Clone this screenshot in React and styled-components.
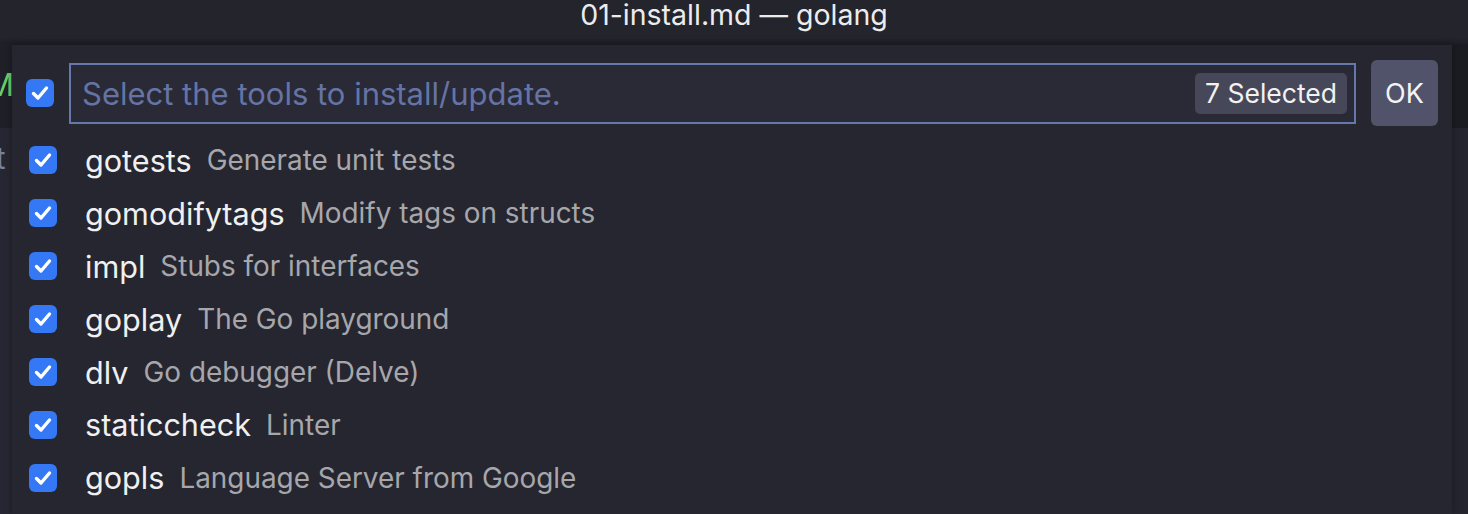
import React from "react";
import styled, { createGlobalStyle } from "styled-components";

const GlobalStyle = createGlobalStyle`
  body {
    margin: 0;
    background: #22232b;
    font-family: Inter, "Noto Sans", sans-serif;
    -webkit-font-smoothing: antialiased;
  }
`;

const Window = styled.div`
  width: 1468px;
  height: 514px;
  display: flex;
  flex-direction: column;
  overflow: hidden;
  background: #262732;
`;

const TitleBar = styled.div`
  height: 44px;
  flex: none;
  display: flex;
  justify-content: center;
  align-items: flex-start;
  box-sizing: border-box;
  background: linear-gradient(#23242c 85%, #1e1f26);
  color: #ececec;
  font-size: 28.5px;
  line-height: 29px;
`;

const Workbench = styled.div`
  flex: 1;
  position: relative;
  display: flex;
  flex-direction: column;
`;

const TabStrip = styled.div`
  height: 84px;
  flex: none;
  display: flex;
  align-items: center;
  background: #1f2028;
  box-shadow: inset -16px 0 0 #1b1c22;
`;

const ModifiedMark = styled.span`
  margin-left: -14px;
  color: #6bd068;
  font-size: 31px;
  padding-bottom: 4px;
`;

const Editor = styled.div`
  flex: 1;
  padding-top: 12px;
  box-shadow: inset -16px 0 0 #24252f;
  color: #78829f;
  font-size: 30px;
`;

const EditorText = styled.div`
  margin-left: -20px;
`;

const QuickPick = styled.div`
  position: absolute;
  top: 1px;
  left: 12px;
  right: 16px;
  bottom: 0;
  background: #252630;
  box-shadow: 0 0 8px rgba(0, 0, 0, 0.35);
  display: flex;
  flex-direction: column;
`;

const Header = styled.div`
  display: flex;
  align-items: center;
  gap: 15px;
  padding: 15px 14px 0 14px;
  height: 66px;
`;

const CheckBox = styled.span`
  width: 28px;
  height: 28px;
  flex: none;
  border-radius: 6px;
  background: #3478f6;
  display: flex;
  align-items: center;
  justify-content: center;
`;

const InputBox = styled.div`
  flex: 1;
  height: 61px;
  box-sizing: border-box;
  border: 2px solid #6677aa;
  background: #292a36;
  display: flex;
  align-items: center;
  padding: 0 7px 0 11px;
`;

const Placeholder = styled.span`
  flex: 1;
  color: #6574a4;
  font-size: 31px;
`;

const CountBadge = styled.span`
  background: #464859;
  color: #f2f2f2;
  border-radius: 5px;
  font-size: 26.5px;
  line-height: 29px;
  padding: 6px 10px 6px;
`;

const OkButton = styled.button`
  width: 67px;
  height: 66px;
  flex: none;
  border: none;
  border-radius: 6px;
  background: #50536a;
  color: #f4f4f4;
  font-family: inherit;
  font-size: 27px;
  padding: 0;
`;

const List = styled.div`
  padding-top: 8px;
  display: flex;
  flex-direction: column;
`;

const Row = styled.div`
  height: 52.9px;
  display: flex;
  align-items: center;
  padding-left: 17px;
`;

const Label = styled.span`
  margin-left: 28px;
  color: #f0f0f0;
  font-size: 30.6px;
`;

const Description = styled.span`
  margin-left: 15px;
  color: #a7a7ab;
  font-size: 27.9px;
`;

const Check = () => (
  <CheckBox>
    <svg width="20" height="20" viewBox="0 0 20 20">
      <path
        d="M3.5 10.5 L8 15 L16.5 5"
        fill="none"
        stroke="#fff"
        strokeWidth="3.4"
        strokeLinecap="round"
        strokeLinejoin="round"
      />
    </svg>
  </CheckBox>
);

const tools = [
  ["gotests", "Generate unit tests"],
  ["gomodifytags", "Modify tags on structs"],
  ["impl", "Stubs for interfaces"],
  ["goplay", "The Go playground"],
  ["dlv", "Go debugger (Delve)"],
  ["staticcheck", "Linter"],
  ["gopls", "Language Server from Google"],
];

export default function App() {
  return (
    <Window>
      <GlobalStyle />
      <TitleBar>01-install.md — golang</TitleBar>
      <Workbench>
        <TabStrip>
          <ModifiedMark>M</ModifiedMark>
        </TabStrip>
        <Editor>
          <EditorText>st</EditorText>
        </Editor>
        <QuickPick>
          <Header>
            <Check />
            <InputBox>
              <Placeholder>Select the tools to install/update.</Placeholder>
              <CountBadge>7 Selected</CountBadge>
            </InputBox>
            <OkButton>OK</OkButton>
          </Header>
          <List>
            {tools.map(([name, desc]) => (
              <Row key={name}>
                <Check />
                <Label>{name}</Label>
                <Description>{desc}</Description>
              </Row>
            ))}
          </List>
        </QuickPick>
      </Workbench>
    </Window>
  );
}
